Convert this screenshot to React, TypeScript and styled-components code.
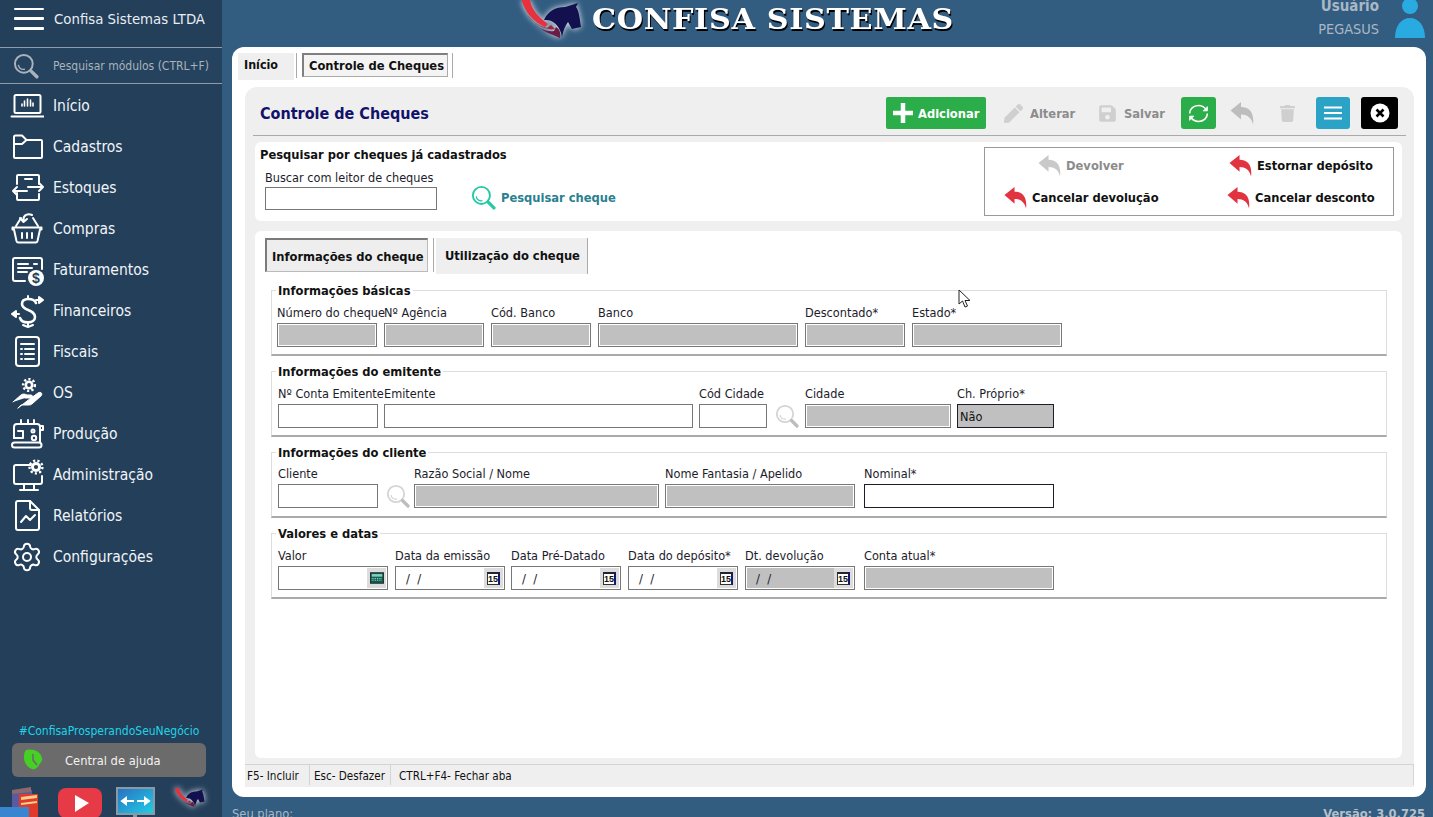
import React from "react";
import styled, { createGlobalStyle } from "styled-components";
import { Settings } from "lucide-react";
import { FaPen, FaSave, FaTrash } from "react-icons/fa";

const Global = createGlobalStyle`
  html, body { margin: 0; padding: 0; overflow: hidden; background: #325c80; }
  * { box-sizing: border-box; }
`;
const UI = `"DejaVu Sans Condensed", "DejaVu Sans", Verdana, sans-serif`;
const App0 = styled.div`
  width: 1433px; height: 817px; display: flex; overflow: hidden; position: relative;
  font-family: ${UI}; font-size: 12.6px; color: #111;
`;
const Sidebar = styled.aside`
  width: 222px; height: 817px; flex: none; background: #243f5a; display: flex; flex-direction: column; position: relative;
`;
const SideHead = styled.div`
  height: 47px; display: flex; align-items: center; padding: 0 0 10px 14px; gap: 10px; color: #e8eef3; font-size: 14.8px; white-space: nowrap;
`;
const Burger = styled.div`
  width: 30px; height: 22px; display: flex; flex-direction: column; justify-content: space-between; flex: none;
  & > i { display: block; height: 2.5px; background: #fff; border-radius: 1px; }
`;
const SearchRow = styled.div`
  height: 37px; border-top: 1px solid #8f9ba6; border-bottom: 1px solid #8f9ba6; background: #25435f;
  display: flex; align-items: center; padding-left: 13px; gap: 14px; color: #a9b3bc; font-size: 12px; white-space: nowrap;
`;
const Menu = styled.nav`
  display: flex; flex-direction: column; padding-top: 1px;
`;
const MenuItem = styled.div`
  height: 41px; display: flex; align-items: center; padding-left: 10px; gap: 9px; color: #f1f5f8; font-size: 15.5px;
  & > svg { flex: none; }
`;
const Spacer = styled.div`flex: 1;`;
const Hashtag = styled.div`
  text-align: center; color: #22d3e6; font-size: 12px; margin-bottom: 5px; padding-right: 4px; white-space: nowrap;
`;
const HelpButton = styled.div`
  height: 34px; margin: 0 16px 0 12px; border-radius: 6px; background: #6b6b6b; color: #f2f2f2;
  display: flex; align-items: center; font-size: 12.8px; padding-left: 11px; gap: 21px;
`;
const BottomIcons = styled.div`
  height: 40px; padding: 10px 0 0 11px; display: flex; align-items: flex-start; flex: none;
`;
const TaskTab = styled.div`
  position: absolute; left: 0; bottom: 0; width: 29px; height: 10px; background: #3a85d0;
`;
const Main = styled.main`
  flex: 1; min-width: 0; display: flex; flex-direction: column; padding: 0 7px 0 10px;
`;
const TopBar = styled.header`
  height: 47px; flex: none; display: flex; align-items: flex-start; padding-left: 286px; overflow: hidden; position: relative;
`;
const Brand = styled.div`
  font-family: "DejaVu Serif", serif; font-weight: 700; font-size: 28px; line-height: 34px; color: #fff; margin: 3px 0 0 4px;
  text-shadow: 1px 1.5px 0 #000; letter-spacing: 0.6px; white-space: nowrap; transform-origin: left top; transform: scaleX(1.08);
`;
const UserBox = styled.div`
  margin-left: auto; margin-right: 47px; text-align: right; color: #a9b8c4; line-height: 1;
`;
const UserName = styled.div`font-weight: 700; font-size: 15px; margin-top: -1px; height: 23px;`;
const UserOrg = styled.div`font-size: 14.4px;`;
const UserIcon = styled.svg`position: absolute; right: -1px; top: -2px;`;
const Panel = styled.section`
  height: 750px; flex: none; background: #fff; border-radius: 12px; padding: 6px 12px 0 13px; display: flex; flex-direction: column;
`;
const PageTabs = styled.div`
  height: 25px; flex: none; margin-left: -7px; display: flex; margin-bottom: 9px;
`;
const HomeTab = styled.div`
  width: 56px; height: 27px; background: #efefef; padding: 4px 0 0 6px; font-weight: 700; font-size: 12.4px; color: #111; margin-right: 2px;
`;
const Sep = styled.div`
  width: 1px; height: 25px; background: #aaa; margin: 0 2px 0 0;
`;
const PageTab = styled.div`
  width: 146px; height: 24px; margin-left: 3px; border: 1px solid #aaa; border-top: 2px solid #808080; border-left: 2px solid #808080;
  background: #f4f4f4; padding: 3px 0 0 5px; font-weight: 700; font-size: 12.8px; white-space: nowrap; margin-right: 4px;
`;
const Gray = styled.div`
  height: 700px; flex: none; background: #efefef; border-radius: 12px 12px 0 0; display: flex; flex-direction: column;
`;
const Toolbar = styled.div`
  height: 49px; flex: none; margin: 0 8px 0 8px; border-bottom: 1px solid #aaa; display: flex; align-items: center; padding-top: 4px; padding-left: 7px;
`;
const Title = styled.h1`
  margin: 0 auto 0 0; font-size: 16px; font-weight: 700; color: #12126b; font-family: ${UI}; white-space: nowrap;
`;
const AddBtn = styled.div`
  width: 100px; height: 32px; background: #2bad49; border-radius: 2px; color: #fff; font-weight: 700; font-size: 12.8px;
  display: flex; align-items: center; padding-left: 6px; gap: 4px;
`;
const GhostBtn = styled.div<{ $w: number; $pad: number }>`
  width: ${p => p.$w}px; display: flex; align-items: center; gap: 7px; color: #8c8c8c; font-weight: 700; font-size: 12.8px; padding-left: ${p => p.$pad}px;
`;
const SquareBtn = styled.div<{ $bg: string; $ml: number; $w: number }>`
  width: ${p => p.$w}px; height: 32px; margin-left: ${p => p.$ml}px; background: ${p => p.$bg}; border-radius: 3px;
  display: flex; align-items: center; justify-content: center; flex: none;
`;
const IconSlot = styled.div<{ $ml: number }>`
  width: 24px; margin-left: ${p => p.$ml}px; display: flex; justify-content: center; flex: none;
`;
const ToolEnd = styled.div`width: 8px; flex: none;`;
const SearchCard = styled.div`
  height: 79px; flex: none; margin: 6px 12px 0 10px; background: #fff; border-radius: 6px; display: flex; position: relative;
`;
const SearchLeft = styled.div`
  flex: 1; padding: 5px 0 0 5px;
`;
const SearchTitle = styled.div`font-weight: 700; font-size: 12.8px; line-height: 15px; margin-bottom: 8px;`;
const SearchLine = styled.div`display: flex; align-items: flex-end; padding-left: 5px;`;
const SearchLink = styled.div`
  display: flex; align-items: center; gap: 5px; color: #2a7f90; font-weight: 700; font-size: 12.8px; margin-left: 34px; white-space: nowrap;
`;
const ActionBox = styled.div`
  width: 410px; height: 69px; margin: 5px 8px 0 0; border: 1px solid #999; display: grid; grid-template-columns: 220px 1fr; grid-template-rows: 32px 32px; padding: 1px 0 0;
`;
const Action = styled.div<{ $indent: number; $off?: boolean }>`
  display: flex; align-items: center; gap: 5px; padding-left: ${p => p.$indent}px; font-weight: 700; font-size: 12.8px; white-space: nowrap;
  color: ${p => p.$off ? "#8c8c8c" : "#111"};
`;
const FormCard = styled.div`
  height: 527px; flex: none; margin: 10px 12px 0 10px; background: #fff; border-radius: 6px; padding: 7px 15px 0 16px;
`;
const FormTabs = styled.div`display: flex; height: 35px; margin: 0 0 9px -6px;`;
const FormTabActive = styled.div`
  width: 163px; height: 34px; border: 1px solid #bbb; border-top: 2px solid #7b7b7b; border-left: 2px solid #7b7b7b; background: #eee;
  font-weight: 700; font-size: 12.8px; padding: 9px 0 0 5px; white-space: nowrap;
`;
const TabLine = styled.div`width: 1px; height: 34px; background: #aaa; margin: 0 2px 0 5px;`;
const FormTab = styled.div`
  width: 152px; height: 36px; background: #efefef; border-right: 1px solid #aaa; font-weight: 700; font-size: 12.8px; padding: 10px 0 0 9px; white-space: nowrap;
`;
const Group = styled.fieldset`
  margin: 0 0 7px 0; padding: 0 0 7px 6px; min-width: 0; border: 1px solid #ddd; border-bottom: 2px solid #aaa;
`;
const Legend = styled.legend`
  padding: 2px 2px 0; margin-left: -2px; font-weight: 700; font-size: 12.8px; line-height: 14px; color: #111; white-space: nowrap;
`;
const Row = styled.div<{ $up?: boolean }>`
  display: flex; align-items: flex-end; margin-top: ${p => p.$up ? 6 : 7}px; margin-bottom: ${p => p.$up ? 1 : 0}px;
`;
const Field = styled.div<{ $w: number; $ml?: number }>`
  width: ${p => p.$w}px; margin-left: ${p => p.$ml ?? 0}px; flex: none;
`;
const Label = styled.div<{ $mb?: number }>`
  font-size: 12.6px; line-height: 15px; margin-bottom: ${p => p.$mb ?? 3}px; white-space: nowrap; color: #1c1c2c;
`;
const Input = styled.div<{ $off?: boolean; $dark?: boolean; $h?: number }>`
  height: ${p => p.$h ?? 24}px; border: 1px solid ${p => p.$dark ? "#1c1c2c" : "#777"}; background: ${p => p.$off ? "#bfc0bf" : "#fff"};
  box-shadow: ${p => p.$off && !p.$dark ? "inset 0 0 0 1px #fff" : "none"}; font-size: 12.6px; display: flex; align-items: center; padding-left: 2px; position: relative;
`;
const DateText = styled.span`
  margin-left: 8px; font-size: 13px; white-space: pre; color: #223;
`;
const SideBtn = styled.div`
  position: absolute; right: 1px; top: 1px; bottom: 1px; width: 19px; background: #dcdcdc; display: flex; align-items: center; justify-content: center;
`;
const Cal = styled.span`
  width: 13px; height: 13px; background: #fff; border: 1px solid #333; border-top: 2px solid #223; border-right: 2px solid #16166b;
  font: 700 9px/10px "Liberation Sans", sans-serif; text-align: center; color: #111; display: block;
`;
const MagSlot = styled.div<{ $ml: number; $w: number }>`
  width: ${p => p.$w}px; margin-left: ${p => p.$ml}px; height: 24px; flex: none; display: flex;
`;
const StatusBar = styled.footer`
  height: 21px; flex: none; margin-top: 6px; border-top: 1px solid #d4d4d4; border-right: 1px solid #d4d4d4; display: flex; font-size: 11.6px; align-items: center;
`;
const StatusCell = styled.div<{ $w: number; $pad: number; $sep?: boolean }>`
  width: ${p => p.$w}px; height: 100%; padding: 1px 0 0 ${p => p.$pad}px; border-right: ${p => p.$sep ? "1px solid #d4d4d4" : "none"}; display: flex; align-items: center; white-space: nowrap;
`;
const BottomLine = styled.div`
  height: 20px; flex: none; display: flex; justify-content: space-between; padding: 8px 1px 0 0; color: #a9b8c4; font-size: 12.8px; line-height: 18px;
`;
const Version = styled.b`font-weight: 700; color: #b5c0c8;`;
const Cursor = styled.svg`position: absolute; left: 958px; top: 289px;`;

const S = { fill: "none", stroke: "#fff", strokeWidth: 2, strokeLinecap: "round", strokeLinejoin: "round" } as const;
const Ico = ({ children }: { children: React.ReactNode }) => <svg width="34" height="34" viewBox="0 0 34 34" {...S}>{children}</svg>;

const gear = (cx: number, cy: number, r: number) => (
  <g>
    <circle cx={cx} cy={cy} r={r + 1.4} fill="none" stroke="#fff" strokeWidth={2.4} strokeDasharray="2.2 2.2" strokeLinecap="butt" />
    <circle cx={cx} cy={cy} r={r} fill="#fff" stroke="none" />
    <circle cx={cx} cy={cy} r={r * 0.42} fill="#243f5a" stroke="none" />
  </g>
);

const icons: Record<string, React.ReactNode> = {
  "Início": <Ico><rect x="4.5" y="6" width="26" height="18" rx="1.5" /><path d="M1.5 27.5H33.5" /><path d="M12 17v-2M14.5 17v-5M17.5 17V10M20.5 17v-6M23 17v-3" strokeWidth="1.6" /></Ico>,
  "Cadastros": <Ico><path d="M4 27V7a1.5 1.5 0 0 1 1.5-1.5H12L16.5 10H31a1 1 0 0 1 1 1V27a1 1 0 0 1-1 1H5a1 1 0 0 1-1-1Z" /><path d="M4 14H12L16.5 10" /></Ico>,
  "Estoques": <Ico><path d="M7 13V5a1 1 0 0 1 1-1H28a1 1 0 0 1 1 1V13M7 22V28a1 1 0 0 0 1 1H28a1 1 0 0 0 1-1V23" /><path d="M15 8H22M18 16H33M29 12l4 4-4 4M17 20H3M7 16l-4 4 4 4" /></Ico>,
  "Compras": <Ico><path d="M2.5 15.5H31.5V17.5H30L27.5 29a2 2 0 0 1-2 1.5H8.5a2 2 0 0 1-2-1.5L4 17.5H2.5Z" /><path d="M6 14L11 6M28 14L23 6M12 21V26M17 21V26M22 21V26" /><path d="M22 3C18 1 13 3 13.5 8M10 6L13.5 10L17 7" /></Ico>,
  "Faturamentos": <Ico><path d="M15 28H5a2 2 0 0 1-2-2V7a2 2 0 0 1 2-2H30a2 2 0 0 1 2 2V16" /><path d="M8 11H18M24 11H27M8 15H22M8 19H17" /><circle cx="26" cy="25" r="8" fill="#fff" stroke="none" /><text x="26" y="30" textAnchor="middle" fontSize="14" fontWeight="700" fontFamily="Liberation Sans" fill="#243f5a" stroke="none">$</text></Ico>,
  "Financeiros": <Ico><path d="M26 9C24 4 12 3 12 10C12 17 25 15 25 23C25 30 12 30 10 24" strokeWidth="2.6" /><path d="M18 2V5M18 29V33M13 31L18 33L23 31" /><path d="M2 20H9M2 20l4-3v6Z" /><path d="M26 6H33M33 6l-4-3v6Z" /></Ico>,
  "Fiscais": <Ico><rect x="6" y="2" width="23" height="29" rx="3" /><path d="M11 9H24M11 14h1M15 14H24M11 19h1M15 19H24M11 24h1M15 24H24" /></Ico>,
  "OS": <Ico>{gear(19, 9, 4.5)}<path d="M3 26L11 19C13 17.5 15 18 17 19H21C23 19 23 22 21 22H15M21 22L28 17C31 15 33 18 31 20L23 27C21 29 20 29 18 29H11L8 32Z" fill="#fff" strokeWidth="1" /></Ico>,
  "Produção": <Ico><path d="M4 21V10a3 3 0 0 1 3-3H27a3 3 0 0 1 3 3V25" /><path d="M4 21H13V14H8" /><path d="M4.5 25.5H29a2.5 2.5 0 0 1 0 5H4.5a2.5 2.5 0 0 1 0-5Z" /><path d="M11 7V3M18 7V3M24 7V3M30 9H33V13H30" /><circle cx="23" cy="14" r="1.5" /><circle cx="24" cy="21" r="2.2" /></Ico>,
  "Administração": <Ico><path d="M21 7H6a2 2 0 0 0-2 2V24a2 2 0 0 0 2 2H30a2 2 0 0 0 2-2V18" /><path d="M14 27V31M24 27V31M10 32H28" />{gear(26, 9, 5)}</Ico>,
  "Relatórios": <Ico><path d="M20 2H8a2 2 0 0 0-2 2V29a2 2 0 0 0 2 2H27a2 2 0 0 0 2-2V11Z" /><path d="M20 2V9a2 2 0 0 0 2 2H29" /><path d="M11 23L16 17L20 21L25 16" /></Ico>,
};

const Reply = ({ c, s = 24 }: { c: string; s?: number }) => (
  <svg width={s} height={s} viewBox="0 0 24 24" style={{ flex: "none" }}><path fill={c} d="M0.5 9.5L11 1V6C19 6 24.5 11 23 23.5C21.5 16.5 17 13.5 11 13.5V18.5Z" /></svg>
);
const Mag = ({ c, s = 24, h }: { c: string; s?: number; h?: string }) => (
  <svg width={s} height={s} viewBox="0 0 24 24" fill="none" style={{ flex: "none" }}>
    <circle cx="10" cy="10" r="8.2" stroke={c} strokeWidth="1.8" />
    <path d="M5 11C5.5 14 8 15.5 11 15" stroke={c} strokeWidth="1.2" />
    <path d="M16.5 16.5L22 22" stroke={h ?? c} strokeWidth="3.2" strokeLinecap="round" />
  </svg>
);
const Horse = ({ w, h }: { w: number; h: number }) => (
  <svg width={w} height={h} viewBox="0 0 70 44" style={{ filter: "drop-shadow(0 0 3px #ffffffee)", flex: "none", display: "block" }}>
    <path fill="#13104f" d="M26 20C30 11 37 7 47 7L60 3L58 7C61 10 62 20 63 27L54 29L50 22C47 26 45 31 44 37C43 31 40 25 35 22C32 20 29 20 26 20Z" />
    <path fill="#e8313c" d="M3.7 0H12C13 8 20 17 30 24L27 27C16 22 7 13 3.7 0Z" />
    <path fill="#a5263f" d="M9.5 15C13 21 21 26 29 28L33 25L37 29C29 31 17 25 9.5 15Z" />
    <path fill="#6a1c45" d="M16 24C24 31 33 34 42 38C43 34 42 29 38 27L36 31C29 32 22 29 16 24Z" />
  </svg>
);

const Calc = () => (
  <svg width="14" height="12" viewBox="0 0 16 13"><rect x="0.5" y="0.5" width="15" height="12" fill="#0c5c4c" stroke="#222" /><rect x="2" y="2" width="12" height="3" fill="#7fd0c0" /><path d="M2 7h12M2 9h12" stroke="#cfe" strokeDasharray="1 1" /></svg>
);

const DateField = ({ label, w, ml, off }: { label: string; w: number; ml?: number; off?: boolean }) => (
  <Field $w={w} $ml={ml}>
    <Label>{label}</Label>
    <Input $off={off}><DateText>/  /</DateText><SideBtn><Cal>15</Cal></SideBtn></Input>
  </Field>
);
const TextField = ({ label, w, ml, off, dark, value }: { label: string; w: number; ml?: number; off?: boolean; dark?: boolean; value?: string }) => (
  <Field $w={w} $ml={ml}>
    <Label>{label}</Label>
    <Input $off={off} $dark={dark}>{value}</Input>
  </Field>
);

const menu = ["Início", "Cadastros", "Estoques", "Compras", "Faturamentos", "Financeiros", "Fiscais", "OS", "Produção", "Administração", "Relatórios", "Configurações"];

export default function App() {
  return (
    <App0>
      <Global />
      <Sidebar>
        <SideHead><Burger><i /><i /><i /></Burger>Confisa Sistemas LTDA</SideHead>
        <SearchRow><Mag c="#a9b3bc" s={26} /><span>Pesquisar módulos (CTRL+F)</span></SearchRow>
        <Menu>
          {menu.map(m => (
            <MenuItem key={m}>
              {m === "Configurações" ? <Ico><Settings x={1} y={1} size={32} strokeWidth={1.5} color="#fff" /></Ico> : icons[m]}
              {m}
            </MenuItem>
          ))}
        </Menu>
        <Spacer />
        <Hashtag>#ConfisaProsperandoSeuNegócio</Hashtag>
        <HelpButton>
          <svg width="21" height="22" viewBox="0 0 21 22"><path fill="#46d023" d="M3 1C9-1 18 2 19 9C20 12 17 14 16 16C14 19 12 21 9 20C5 19 1 14 1 9C1 6 1 3 3 1Z" /><path d="M10 5V11L14 16" stroke="#6b6b6b" strokeWidth="1.6" fill="none" /></svg>
          Central de ajuda
        </HelpButton>
        <BottomIcons>
          <svg width="28" height="30" viewBox="0 0 28 30" style={{ flex: "none" }}><rect x="1" y="3" width="20" height="27" fill="#5a5aa0" /><path d="M1 3L20 0V5L1 7Z" fill="#8a6a6a" /><rect x="8" y="7" width="19" height="23" fill="#e03a2a" /><path d="M10 10L26 8V11L10 13ZM10 16L26 14V16L10 18Z" fill="#f5d28a" /></svg>
          <svg width="44" height="30" viewBox="0 0 44 30" style={{ marginLeft: 19, flex: "none" }}><rect width="44" height="30" y="1" rx="8" fill="#e63a46" /><path d="M17 8L31 16L17 25Z" fill="#fff" /></svg>
          <svg width="39" height="30" viewBox="0 0 39 30" style={{ marginLeft: 14, flex: "none" }}><defs><linearGradient id="mon" x1="0" y1="0" x2="1" y2="1"><stop offset="0" stopColor="#2a6fc0" /><stop offset="1" stopColor="#20d0e8" /></linearGradient></defs><rect x="1" y="1" width="37" height="26" fill="url(#mon)" stroke="#8a9aa5" strokeWidth="2" /><path d="M7 14H18M21 14H32M10 11L6 14L10 17ZM29 11L33 14L29 17Z" stroke="#fff" strokeWidth="2" fill="#fff" /><rect x="17" y="27" width="4" height="3" fill="#8a9aa5" /></svg>
          <div style={{ marginLeft: 18 }}><Horse w={35} h={24} /></div>
        </BottomIcons>
        <TaskTab />
      </Sidebar>
      <Main>
        <TopBar>
          <Horse w={70} h={44} />
          <Brand>CONFISA SISTEMAS</Brand>
          <UserBox><UserName>Usuário</UserName><UserOrg>PEGASUS</UserOrg></UserBox>
          <UserIcon width="34" height="42" viewBox="0 0 34 42"><circle cx="17" cy="8" r="8" fill="#29abe2" /><path d="M2 40C2 28 8 20 17 20S32 28 32 40Z" fill="#29abe2" /></UserIcon>
        </TopBar>
        <Panel>
          <PageTabs>
            <HomeTab>Início</HomeTab>
            <Sep />
            <PageTab>Controle de Cheques</PageTab>
            <Sep />
          </PageTabs>
          <Gray>
            <Toolbar>
              <Title>Controle de Cheques</Title>
              <AddBtn>
                <svg width="22" height="22" viewBox="0 0 22 22"><path d="M11 1V21M1 11H21" stroke="#fff" strokeWidth="4.5" /></svg>
                Adicionar
              </AddBtn>
              <GhostBtn $w={106} $pad={18}><FaPen size={19} color="#cfcfcf" />Alterar</GhostBtn>
              <GhostBtn $w={89} $pad={6}><FaSave size={19} color="#cfcfcf" />Salvar</GhostBtn>
              <SquareBtn $bg="#2bad49" $ml={0} $w={35}>
                <svg width="23" height="23" viewBox="0 0 26 26" fill="none" stroke="#fff" strokeWidth="1.8"><path d="M3 13C3 8 7 4 13 4C17 4 20 6 22 9" /><path d="M23 13C23 18 19 22 13 22C9 22 6 20 4 17" /><path d="M23 5V10H18" fill="#fff" strokeWidth="1" /><path d="M3 21V16H8" fill="#fff" strokeWidth="1" /></svg>
              </SquareBtn>
              <IconSlot $ml={14}><Reply c="#bdbdbd" s={24} /></IconSlot>
              <IconSlot $ml={21}><FaTrash size={17} color="#cfcfcf" /></IconSlot>
              <SquareBtn $bg="#2ba3c7" $ml={17} $w={34}>
                <svg width="20" height="14" viewBox="0 0 20 14"><path d="M1 1.5H19M1 7H19M1 12.5H19" stroke="#fff" strokeWidth="2" /></svg>
              </SquareBtn>
              <SquareBtn $bg="#000" $ml={11} $w={37}>
                <svg width="20" height="20" viewBox="0 0 20 20"><circle cx="10" cy="10" r="9.5" fill="#fff" /><path d="M6.5 6.5L13.5 13.5M13.5 6.5L6.5 13.5" stroke="#000" strokeWidth="2.6" /></svg>
              </SquareBtn>
              <ToolEnd />
            </Toolbar>
            <SearchCard>
              <SearchLeft>
                <SearchTitle>Pesquisar por cheques já cadastrados</SearchTitle>
                <SearchLine>
                  <Field $w={172}>
                    <Label $mb={2}>Buscar com leitor de cheques</Label>
                    <Input $h={23} />
                  </Field>
                  <SearchLink><Mag c="#27c9a5" s={25} />Pesquisar cheque</SearchLink>
                </SearchLine>
              </SearchLeft>
              <ActionBox>
                <Action $indent={53} $off><Reply c="#c9c9c9" s={23} />Devolver</Action>
                <Action $indent={24}><Reply c="#e23440" s={23} />Estornar depósito</Action>
                <Action $indent={19}><Reply c="#e23440" s={23} />Cancelar devolução</Action>
                <Action $indent={22}><Reply c="#e23440" s={23} />Cancelar desconto</Action>
              </ActionBox>
            </SearchCard>
            <FormCard>
              <FormTabs>
                <FormTabActive>Informações do cheque</FormTabActive>
                <TabLine />
                <FormTab>Utilização do cheque</FormTab>
              </FormTabs>
              <Group>
                <Legend>Informações básicas</Legend>
                <Row>
                  <TextField label="Número do cheque" w={100} ml={-1} off />
                  <TextField label="Nº Agência" w={100} ml={7} off />
                  <TextField label="Cód. Banco" w={100} ml={7} off />
                  <TextField label="Banco" w={200} ml={7} off />
                  <TextField label="Descontado*" w={100} ml={7} off />
                  <TextField label="Estado*" w={150} ml={7} off />
                </Row>
              </Group>
              <Group>
                <Legend>Informações do emitente</Legend>
                <Row>
                  <TextField label="Nº Conta Emitente" w={100} />
                  <TextField label="Emitente" w={309} ml={6} />
                  <TextField label="Cód Cidade" w={68} ml={6} />
                  <MagSlot $ml={8} $w={24}><Mag c="#d4d4d4" h="#bdbdbd" s={24} /></MagSlot>
                  <TextField label="Cidade" w={146} ml={6} off />
                  <TextField label="Ch. Próprio*" w={97} ml={6} off dark value="Não" />
                </Row>
              </Group>
              <Group>
                <Legend>Informações do cliente</Legend>
                <Row $up>
                  <TextField label="Cliente" w={100} />
                  <MagSlot $ml={8} $w={24}><Mag c="#d4d4d4" h="#bdbdbd" s={24} /></MagSlot>
                  <TextField label="Razão Social / Nome" w={245} ml={4} off />
                  <TextField label="Nome Fantasia / Apelido" w={190} ml={6} off />
                  <TextField label="Nominal*" w={190} ml={9} dark />
                </Row>
              </Group>
              <Group>
                <Legend>Valores e datas</Legend>
                <Row>
                  <Field $w={110}>
                    <Label>Valor</Label>
                    <Input><SideBtn><Calc /></SideBtn></Input>
                  </Field>
                  <DateField label="Data da emissão" w={110} ml={7} />
                  <DateField label="Data Pré-Datado" w={110} ml={6} />
                  <DateField label="Data do depósito*" w={110} ml={7} />
                  <DateField label="Dt. devolução" w={110} ml={7} off />
                  <TextField label="Conta atual*" w={190} ml={9} off />
                </Row>
              </Group>
            </FormCard>
            <StatusBar>
              <StatusCell $w={65} $pad={2} $sep>F5- Incluir</StatusCell>
              <StatusCell $w={81} $pad={4} $sep>Esc- Desfazer</StatusCell>
              <StatusCell $w={300} $pad={8}>CTRL+F4- Fechar aba</StatusCell>
            </StatusBar>
          </Gray>
        </Panel>
        <BottomLine><span>Seu plano:</span><Version>Versão: 3.0.725</Version></BottomLine>
      </Main>
      <Cursor width="13" height="21" viewBox="0 0 13 21"><path d="M1 1V15L4.5 12L7 18L9.5 17L7 11.5H12Z" fill="#fff" stroke="#222" strokeWidth="1" /></Cursor>
    </App0>
  );
}
